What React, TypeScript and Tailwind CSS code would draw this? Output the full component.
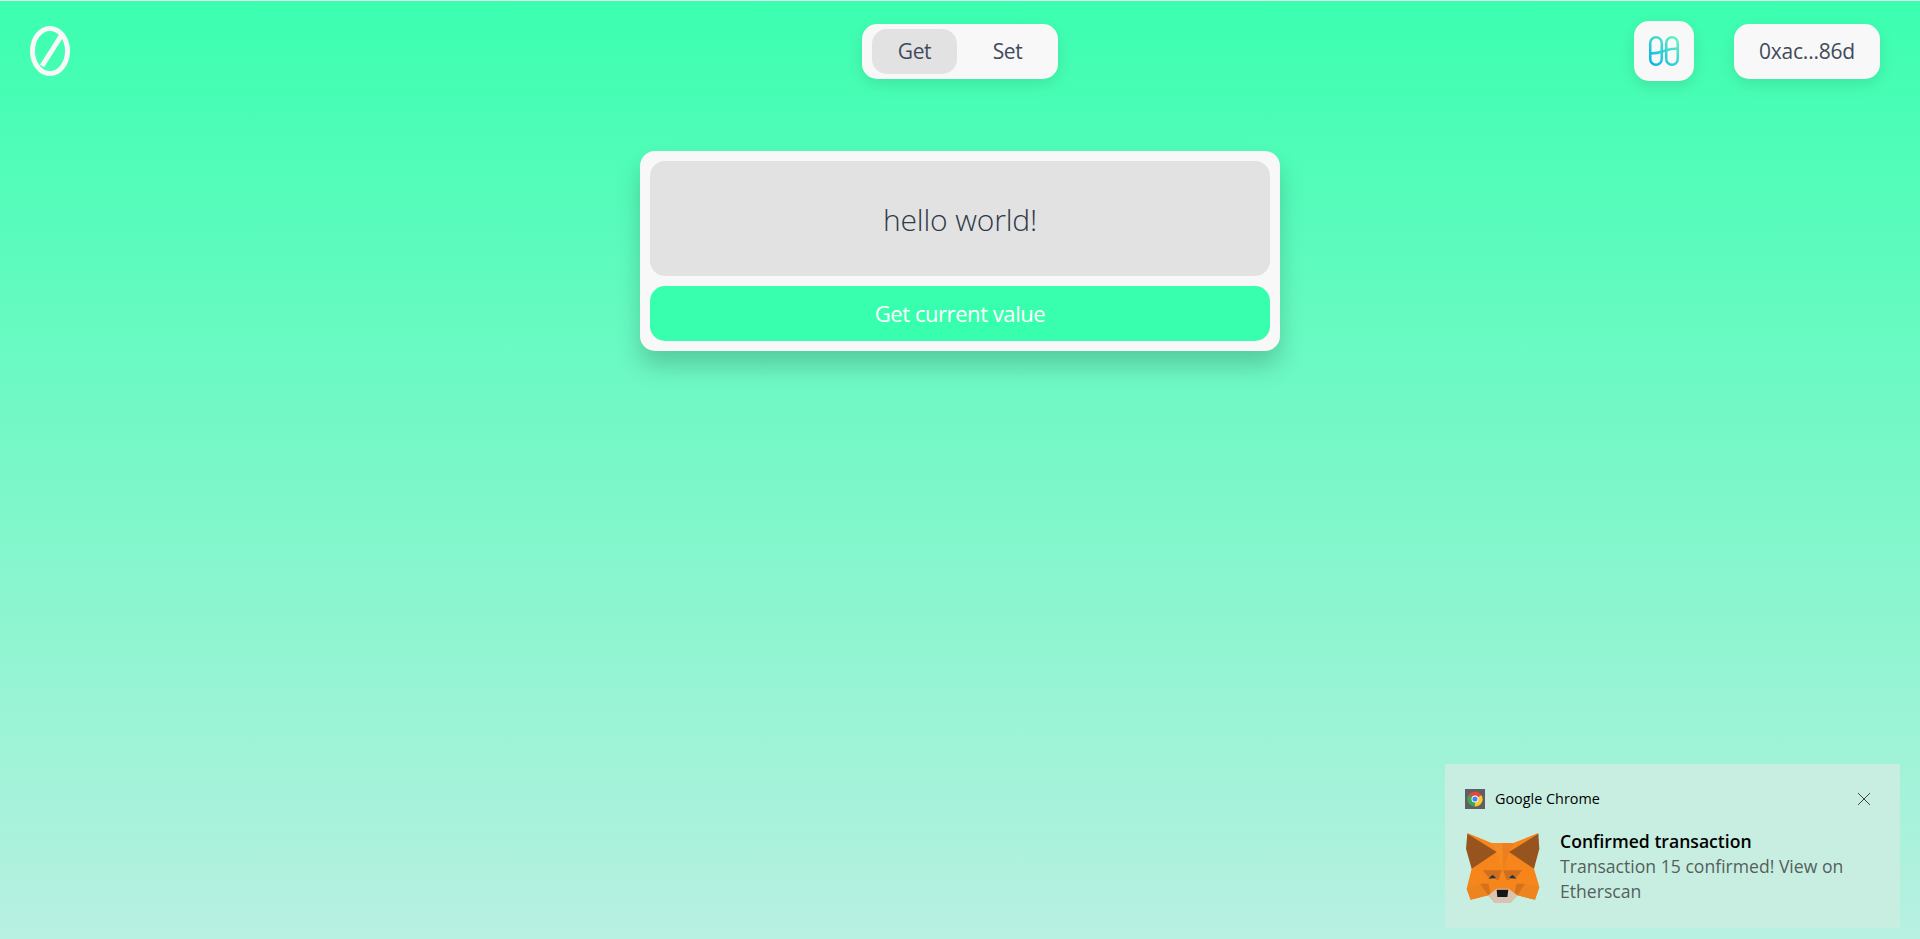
import React from 'react';

function NullLogo() {
  return (
    <svg className="blur-[0.4px]" width="42" height="52" viewBox="0 0 42 52" fill="none" stroke="#f8f8f8" strokeWidth="5">
      <ellipse cx="21" cy="26" rx="17.500" ry="22.500" />
      <path d="M34 8 L13 41" />
    </svg>
  );
}

function HarmonyIcon() {
  return (
    <svg width="30" height="30" viewBox="0 0 30 30" fill="none" stroke="url(#harmony)" strokeWidth="2.500">
      <defs>
        <linearGradient id="harmony" x1="0" y1="30" x2="30" y2="0" gradientUnits="userSpaceOnUse">
          <stop offset="0" stopColor="#00aee9" />
          <stop offset="1" stopColor="#69fabd" />
        </linearGradient>
      </defs>
      <rect x="1.250" y="1.250" width="11.500" height="27.500" rx="5.750" />
      <rect x="17.250" y="1.250" width="11.500" height="27.500" rx="5.750" />
      <path d="M1 17.500 C6 17.500 10 17 15 15 C20 13 24 12.500 29 12.500" />
    </svg>
  );
}

function ChromeIcon() {
  return (
    <svg width="20" height="20" viewBox="0 0 20 20">
      <rect width="20" height="20" fill="#5f5f64" />
      <circle cx="10" cy="10" r="7.500" fill="#dd4b39" />
      <path d="M10 10 L3.500 6.200 A7.500 7.500 0 0 0 10 17.500 Z" fill="#3aa757" />
      <path d="M10 10 L16.500 6.200 A7.500 7.500 0 0 1 10 17.500 Z" fill="#fcc934" />
      <circle cx="10" cy="10" r="3.500" fill="#fff" />
      <circle cx="10" cy="10" r="2.600" fill="#4285f4" />
    </svg>
  );
}

function FoxIcon() {
  return (
    <svg className="blur-[0.4px]" width="85" height="85" viewBox="0 0 255 255">
      <path d="M22 18 L95 48 L160 48 L235 18 L222 125 L238 180 L225 218 L172 205 L150 228 L105 228 L85 205 L32 218 L20 185 L35 125Z" fill="#f6851b" />
      <path d="M95 48 L128 48 L125 130 L110 75Z" fill="#f48c25" />
      <path d="M160 48 L128 48 L130 130 L147 75Z" fill="#ee7f1f" />
      <path d="M22 20 L110 75 L35 125 L18 65Z" fill="#97541f" />
      <path d="M235 20 L147 75 L222 125 L238 65Z" fill="#97541f" />
      <path d="M68 130 L125 130 L115 160 L85 150Z" fill="#cf6f1e" />
      <path d="M187 130 L130 130 L140 160 L170 150Z" fill="#cf6f1e" />
      <path d="M20 185 L60 170 L85 205 L32 218Z" fill="#ee8420" />
      <path d="M238 180 L195 170 L172 205 L225 218Z" fill="#ee8420" />
      <path d="M60 170 L85 170 L92 200 L85 205Z" fill="#d4711c" />
      <path d="M195 170 L170 170 L163 200 L172 205Z" fill="#d4711c" />
      <path d="M85 205 L110 185 L145 185 L172 205 L150 228 L105 228Z" fill="#d9c4b2" />
      <path d="M110 188 L145 188 L142 210 L112 210Z" fill="#161616" />
      <path d="M85 155 L98 143 L108 153Z" fill="#233447" />
      <path d="M170 155 L157 143 L147 153Z" fill="#233447" />
    </svg>
  );
}

export default function App() {
  return (
    <div className="relative h-[939px] overflow-hidden border-t border-[#dff5ee] bg-linear-to-b/srgb from-[#3bffb0] to-[#b8f0e1] font-['Open_Sans',sans-serif] text-[#414a5c]">
      <header className="grid grid-cols-[1fr_auto_1fr] items-start px-[40px] pt-[20px]">
        <div className="-ml-[11px] pt-[4px]">
          <NullLogo />
        </div>
        <nav className="mt-[3px] flex h-[55px] w-[196px] items-center rounded-[15px] bg-[#f8f8f8] px-[10px] text-[21px] tracking-[-0.02em] shadow-[0_5px_15px_rgba(0,0,0,0.1)]">
          <button className="h-[45px] w-[85px] rounded-[15px] bg-[#e2e2e2]">Get</button>
          <button className="h-[45px] flex-1 pl-[10px]">Set</button>
        </nav>
        <div className="flex items-start justify-end gap-[40px]">
          <button className="flex h-[60px] w-[60px] items-center justify-center rounded-[15px] bg-[#f8f8f8] shadow-[0_5px_15px_rgba(0,0,0,0.1)]">
            <HarmonyIcon />
          </button>
          <button className="mt-[3px] h-[55px] w-[146px] rounded-[15px] bg-[#f8f8f8] text-[21px] tracking-[-0.01em] shadow-[0_5px_15px_rgba(0,0,0,0.1)]">0xac...86d</button>
        </div>
      </header>

      <main className="flex justify-center pt-[70px]">
        <div className="flex w-[640px] flex-col gap-[10px] rounded-[15px] bg-[#f8f8f8] p-[10px] shadow-[0_15px_25px_rgba(0,0,0,0.18)]">
          <div className="flex h-[115px] items-center justify-center rounded-[15px] bg-[#e2e2e2] pt-[2px] text-[30px] font-light tracking-[-0.005em] text-[#2f3848]">hello world!</div>
          <button className="h-[55px] rounded-[15px] bg-[#37ffae] text-[22px] tracking-[-0.02em] text-white">Get current value</button>
        </div>
      </main>

      <aside className="absolute left-[1445px] top-[763px] h-[164px] w-[455px] bg-[#c8eee2] px-[20px] pt-[24px]">
        <div className="flex items-center text-[14.400px] text-black">
          <ChromeIcon />
          <span className="ml-[10px]">Google Chrome</span>
          <svg className="ml-auto mr-[9px]" width="14" height="14" viewBox="0 0 14 14" stroke="#444" fill="none">
            <path d="M1 1 L13 13 M13 1 L1 13" />
          </svg>
        </div>
        <div className="mt-[17px] flex">
          <div className="-ml-[5px] shrink-0"><FoxIcon /></div>
          <div className="ml-[15px] pt-[2px] text-[17.600px] leading-[25px]">
            <div className="font-semibold text-black">Confirmed transaction</div>
            <div className="text-[#555f5c]">Transaction 15 confirmed! View on Etherscan</div>
          </div>
        </div>
      </aside>
    </div>
  );
}
